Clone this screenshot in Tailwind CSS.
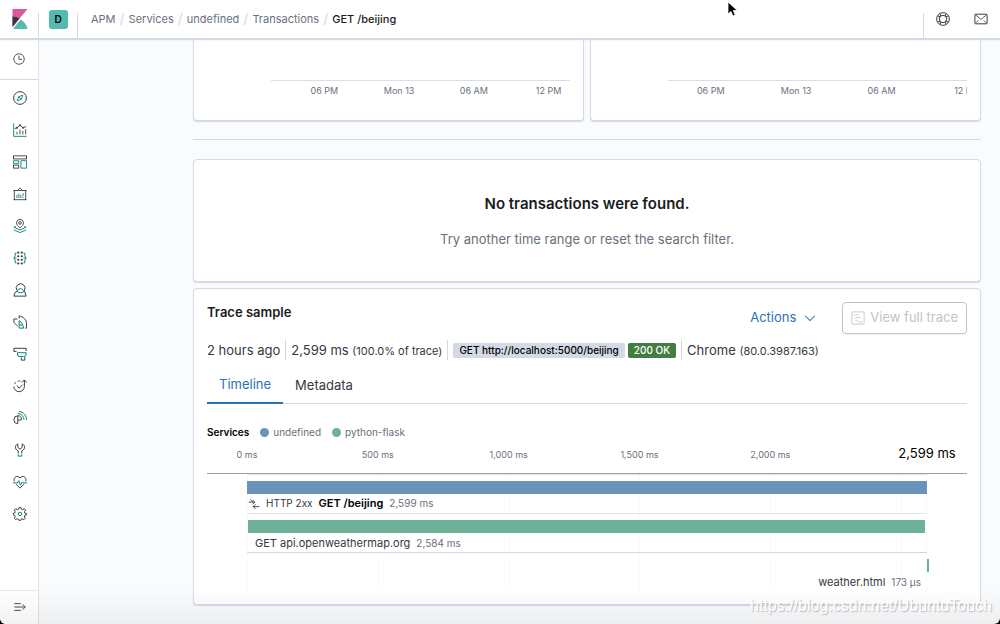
<!DOCTYPE html>
<html lang="en">
  <head>
    <meta charset="UTF-8" />
    <meta name="viewport" content="width=device-width, initial-scale=1.0" />
    <title>GET /beijing - Transactions - APM</title>
    <script src="https://cdn.jsdelivr.net/npm/@tailwindcss/browser@4"></script>
  </head>
  <body class="bg-black font-['Inter',sans-serif] text-[#343741] antialiased">
    <div class="relative flex h-screen flex-col overflow-hidden rounded-b-md bg-[#fafbfd]">
      <!-- Header -->
      <header class="relative z-10 flex h-[39px] shrink-0 items-stretch border-b border-[#d3dae6] bg-white shadow-[0_1px_1px_#d3dae6]">
        <a href="#" aria-label="Kibana home" class="flex w-[38px] items-center justify-center">
          <svg class="ml-0.5 h-5 w-4" viewBox="0 0 16 20">
            <path fill="#e0569b" d="M0.500 0H15.500L0.500 18z" />
            <path fill="#343741" d="M0.500 7.500v10.500l7-8.500C5.500 8.300 3 7.500.5 7.500z" />
            <path fill="#54b9b1" d="M8.600 10.600L1 20h14.500c-.7-3.900-3.300-7.300-6.900-9.400z" />
          </svg>
        </a>
        <div class="mt-[13px] w-px bg-[#d3dae6]"></div>
        <button class="flex w-[38px] items-center justify-center" aria-label="Default space">
          <span class="flex size-[19px] items-center justify-center rounded-[3px] bg-[#54b9b1] text-[10px] font-semibold text-black">D</span>
        </button>
        <div class="mt-[13px] w-px bg-[#d3dae6]"></div>
        <nav class="flex flex-1 items-center gap-1 pl-[13px] text-[11px] text-[#69707d]">
          <a href="#">APM</a>
          <span class="text-sm text-[#d3dae6]">/</span>
          <a href="#">Services</a>
          <span class="text-sm text-[#d3dae6]">/</span>
          <a href="#">undefined</a>
          <span class="text-sm text-[#d3dae6]">/</span>
          <a href="#">Transactions</a>
          <span class="text-sm text-[#d3dae6]">/</span>
          <span class="font-medium text-[#1a1c21]">GET /beijing</span>
        </nav>
        <div class="mt-[13px] w-px bg-[#d3dae6]"></div>
        <button class="flex w-[38px] items-center justify-center" aria-label="Help">
          <svg class="size-[14px]" viewBox="0 0 32 32" fill="none" stroke="#343741" stroke-width="2.200">
            <circle cx="16" cy="16" r="14.500" />
            <circle cx="16" cy="16" r="8.500" />
            <path d="M9 3.500l2 6M23 3.500l-2 6M9 28.500l2-6M23 28.500l-2-6M3.500 9l6 2M3.500 23l6-2M28.500 9l-6 2M28.500 23l-6-2" />
          </svg>
        </button>
        <button class="flex w-[38px] items-center justify-center" aria-label="News">
          <svg class="size-[14px]" viewBox="0 0 32 32" fill="none" stroke="#343741" stroke-width="2.200">
            <rect x="2" y="5" width="28" height="22" rx="2" />
            <path d="M3 6l13 11L29 6M3 26l7-7M29 26l-7-7" stroke-width="1.800" />
          </svg>
        </button>
      </header>

      <div class="flex min-h-0 flex-1">
        <!-- Side nav -->
        <nav class="flex w-[39px] shrink-0 flex-col border-r border-[#e3e8f0] bg-white shadow-xs">
          <a href="#" aria-label="Recently viewed" class="flex h-[41px] items-center justify-center border-b border-[#d3dae6]">
            <svg class="size-3" viewBox="0 0 32 32" fill="none" stroke="#343741" stroke-width="2.200">
              <circle cx="16" cy="16" r="14" />
              <path d="M16 7v10h8" />
            </svg>
          </a>
          <div class="flex flex-1 flex-col pt-0.5 pl-px">
            <a href="#" aria-label="Discover" class="flex h-8 items-center justify-center">
              <svg class="size-[14px]" viewBox="0 0 32 32" fill="none" stroke="#343741" stroke-width="2.200">
                <circle cx="16" cy="16" r="14.500" />
                <path d="M22.500 9.500l-3.500 9.500-9.500 3.500 3.500-9.500zM13 13l6 6" stroke="#017d73" stroke-width="2" />
              </svg>
            </a>
            <a href="#" aria-label="Visualize" class="flex h-8 items-center justify-center">
              <svg class="size-[14px]" viewBox="0 0 32 32" fill="none" stroke="#343741" stroke-width="2">
                <path d="M1.500 1v29.500H31" stroke="#017d73" />
                <path d="M9 20v6M16 15v11M22.500 18v8M29 14v12M4 13l5-2 7-6 7 6 7-3" />
                <circle cx="9" cy="11" r="1.500" /><circle cx="16" cy="5" r="1.500" /><circle cx="23" cy="11" r="1.500" />
              </svg>
            </a>
            <a href="#" aria-label="Dashboard" class="flex h-8 items-center justify-center">
              <svg class="size-[14px]" viewBox="0 0 32 32" fill="none" stroke="#343741" stroke-width="2">
                <rect x="1" y="2" width="30" height="7" />
                <path d="M1 13h12v6H1zM18 13h13v17H18z" stroke="#017d73" />
                <rect x="1" y="23" width="12" height="7" />
              </svg>
            </a>
            <a href="#" aria-label="Canvas" class="flex h-8 items-center justify-center">
              <svg class="size-[14px]" viewBox="0 0 32 32" fill="none" stroke="#343741" stroke-width="2">
                <path d="M1 8h30M1 29h30M3 8v21M29 8v21M10 8l6-6 6 6" />
                <path d="M9 18v7M13.500 15v10M18 18v7M23 14v7M23 23v2" stroke="#017d73" />
              </svg>
            </a>
            <a href="#" aria-label="Maps" class="flex h-8 items-center justify-center">
              <svg class="size-[14px]" viewBox="0 0 32 32" fill="none" stroke="#343741" stroke-width="2">
                <path d="M16 20c-5-4-8-7-8-11a8 8 0 0 1 16 0c0 4-3 7-8 11z" />
                <circle cx="16" cy="9" r="3" />
                <path d="M7 17l-5 2 14 6 14-6-5-2M2 25l14 6 14-6" stroke="#017d73" />
              </svg>
            </a>
            <a href="#" aria-label="Machine Learning" class="flex h-8 items-center justify-center">
              <svg class="size-[14px]" viewBox="0 0 32 32" fill="none" stroke="#017d73" stroke-width="2.200">
                <path d="M8 5H5v6l-3 5 3 5v6h3M24 5h3v6l3 5-3 5v6h-3M3 16h5M24 16h5" />
                <g fill="#343741" stroke="none">
                  <circle cx="12" cy="3.500" r="2.500" /><circle cx="20" cy="3.500" r="2.500" />
                  <circle cx="12" cy="12" r="2.500" /><circle cx="20" cy="12" r="2.500" />
                  <circle cx="12" cy="20" r="2.500" /><circle cx="20" cy="20" r="2.500" />
                  <circle cx="12" cy="28.500" r="2.500" /><circle cx="20" cy="28.500" r="2.500" />
                </g>
              </svg>
            </a>
            <a href="#" aria-label="Metrics" class="flex h-8 items-center justify-center">
              <svg class="size-[14px]" viewBox="0 0 32 32" fill="none" stroke="#343741" stroke-width="2.200">
                <path d="M9 17a10 10 0 1 1 17 0l4 13H2l3-9 5-2" />
                <path d="M10 20c0-5 3-7 7-7s7 2 7 7c-4 3-10 3-14 0z" stroke="#017d73" />
              </svg>
            </a>
            <a href="#" aria-label="Logs" class="flex h-8 items-center justify-center">
              <svg class="size-[14px]" viewBox="0 0 32 32" fill="none" stroke="#343741" stroke-width="2.200">
                <path d="M10 25L2 17V9h8M14 8V2c10 2 17 9 17 18v10h-3" />
                <path d="M14 30V13c6 3 9 9 10 17zM14 23h7" stroke="#017d73" />
              </svg>
            </a>
            <a href="#" aria-label="APM" class="flex h-8 items-center justify-center">
              <svg class="size-[14px]" viewBox="0 0 32 32" fill="none" stroke="#343741" stroke-width="2.200">
                <path d="M8 10H2V3h28v6M19 24v6h8v-7" />
                <path d="M10 13h20v3a6 6 0 0 1-6 6h-8a6 6 0 0 1-6-6z" stroke="#017d73" />
              </svg>
            </a>
            <a href="#" aria-label="Uptime" class="flex h-8 items-center justify-center">
              <svg class="size-[14px]" viewBox="0 0 32 32" fill="none" stroke="#343741" stroke-width="2.200">
                <path d="M2 17a12 12 0 0 0 24 0V3M20 8l6-6 5 6M9 15l5 6 8-8" />
                <path d="M3 12a12 12 0 0 1 4-5M11 5a12 12 0 0 1 6 0" stroke="#017d73" />
              </svg>
            </a>
            <a href="#" aria-label="SIEM" class="flex h-8 items-center justify-center">
              <svg class="size-[14px]" viewBox="0 0 32 32" fill="none" stroke="#343741" stroke-width="2.200">
                <path d="M11 11a9 9 0 1 0 0 18zM11 11a7 7 0 0 1 8 9l-8 1" />
                <path d="M11 6c8 0 13 5 14 14M14 1c10 1 16 8 17 19" stroke="#017d73" />
              </svg>
            </a>
            <a href="#" aria-label="Dev Tools" class="flex h-8 items-center justify-center">
              <svg class="size-[14px]" viewBox="0 0 32 32" fill="none" stroke="#343741" stroke-width="2.200">
                <path d="M12 24v-6C3 14 4 5 11 2v8l5 4 5-4V2c7 3 8 12-1 16v6" />
                <path d="M12 26v4h8v-4" stroke="#017d73" />
              </svg>
            </a>
            <a href="#" aria-label="Stack Monitoring" class="flex h-8 items-center justify-center">
              <svg class="size-[14px]" viewBox="0 0 32 32" fill="none" stroke="#343741" stroke-width="2.200">
                <path d="M3 14c-3-9 7-15 13-7 6-8 16-2 13 7M7 21l9 9 9-9" />
                <path d="M0 18h10l3-5 4 10 4-7 2 2h9" stroke="#017d73" />
              </svg>
            </a>
            <a href="#" aria-label="Management" class="flex h-8 items-center justify-center">
              <svg class="size-[14px]" viewBox="0 0 32 32" fill="none" stroke="#343741" stroke-width="2.200">
                <path d="M13 5l1-4h4l1 4 3 1 4-2 3 3-3 4 1 3 4 1v3l-4 1-1 4 2 3-3 3-4-2-3 1-1 3h-3l-1-3-4-1-3 2-3-3 2-4-1-3-4-1v-3l4-1 1-4-2-3 3-3 4 2z" />
                <circle cx="16" cy="16" r="4" stroke="#017d73" />
              </svg>
            </a>
          </div>
          <button aria-label="Expand navigation" class="flex h-[34px] items-center justify-center border-t border-[#e3e8f0] pb-0.5 pl-px">
            <svg class="size-3" viewBox="0 0 32 32" fill="none" stroke="#343741" stroke-width="2.400">
              <path d="M1 7h17M1 16h29M1 25h17M23 9l7 7-7 7" />
            </svg>
          </button>
        </nav>

        <!-- Content -->
        <main class="min-w-0 flex-1 overflow-hidden pr-[19px] pl-[154px]">
          <div class="grid grid-cols-2 gap-1.5">
            <section class="h-[82px] rounded-b border border-t-0 border-[#d3dae6] bg-white pt-[41px] pr-[13px] pl-[77px] shadow-[0_1px_1px_#d3dae6]">
              <div class="flex border-t border-[#dcdee3] pt-1 text-center text-[9px] leading-3 text-[#69707d]">
                <span class="ml-4 w-1/4 shrink-0">06 PM</span>
                <span class="w-1/4 shrink-0">Mon 13</span>
                <span class="w-1/4 shrink-0">06 AM</span>
                <span class="w-1/4 shrink-0">12 PM</span>
              </div>
            </section>
            <section class="h-[82px] rounded-b border border-t-0 border-[#d3dae6] bg-white pt-[41px] pr-[13px] pl-[77px] shadow-[0_1px_1px_#d3dae6]">
              <div class="flex overflow-hidden border-t border-[#dcdee3] pt-1 text-center text-[9px] leading-3 text-[#69707d]">
                <span class="w-2/7 shrink-0">06 PM</span>
                <span class="w-2/7 shrink-0">Mon 13</span>
                <span class="w-2/7 shrink-0">06 AM</span>
                <span class="w-2/7 shrink-0">12 PM</span>
              </div>
            </section>
          </div>

          <hr class="my-[18px] border-[#d3dae6]" />

          <section class="mt-[19px] rounded border border-[#d3dae6] bg-white pt-8 pb-8 text-center shadow-[0_1px_1px_#d3dae6]">
            <h2 class="text-[15px] leading-6 font-semibold text-[#1a1c21]">No transactions were found.</h2>
            <p class="mt-[13px] text-[13px] leading-5 text-[#69707d]">Try another time range or reset the search filter.</p>
          </section>

          <section class="mt-1.5 rounded border border-[#d3dae6] bg-white px-[13px] pt-[13px] pb-3.5 shadow-[0_1px_1px_#d3dae6]">
            <div class="flex items-start">
              <h3 class="flex-1 text-[13px] leading-5 font-semibold text-[#1a1c21]">Trace sample</h3>
              <button class="flex h-8 items-center gap-2 text-[13px] text-[#2b72b6]">
                Actions
                <svg class="size-3" viewBox="0 0 16 16" fill="none" stroke="currentColor" stroke-width="1.400"><path d="M1.500 5L8 11.500 14.500 5" /></svg>
              </button>
              <button disabled class="ml-[26px] flex h-8 items-center gap-[5px] rounded border border-[#c2c3c6] px-2 text-[13px] text-[#c2c3c6] shadow-xs">
                <svg class="size-[14px]" viewBox="0 0 16 16" fill="none" stroke="currentColor">
                  <rect x="1" y="1" width="14" height="14" rx="1" />
                  <path d="M3 4.500h6M5 7.500h6M5 10.500h3M8 12.500h5" />
                </svg>
                View full trace
              </button>
            </div>

            <div class="mt-1.5 flex h-5 items-center text-[13px] leading-5">
              <span>2 hours ago</span>
              <span class="mx-[5px] h-5 w-px bg-[#d3dae6]"></span>
              <span>2,599 ms <span class="text-[11px]">(100.0% of trace)</span></span>
              <span class="mx-[5px] h-5 w-px bg-[#d3dae6]"></span>
              <span class="rounded-xs bg-[#d3dae6] px-1.5 text-[10px] leading-[15px] font-medium text-black">GET http://localhost:5000/beijing</span>
              <span class="ml-[3px] rounded-xs bg-[#427d41] px-1.5 text-[10px] leading-[15px] font-medium text-white">200 OK</span>
              <span class="mx-[5px] h-5 w-px bg-[#d3dae6]"></span>
              <span>Chrome <span class="text-[11px]">(80.0.3987.163)</span></span>
            </div>

            <div role="tablist" class="mt-[5px] flex border-b border-[#d3dae6] text-[13px] leading-5">
              <button role="tab" aria-selected="true" class="-mb-px border-b-2 border-[#2b72b6] px-3 pt-[9px] pb-2 text-[#2b72b6]">Timeline</button>
              <button role="tab" aria-selected="false" class="px-3 pt-[9px] pb-2">Metadata</button>
            </div>

            <div class="mt-5 flex items-center text-[10px] leading-4 text-[#69707d]">
              <span class="font-semibold text-black">Services</span>
              <span class="ml-[11px] size-[9px] rounded-full bg-[#6992bd]"></span>
              <span class="ml-1">undefined</span>
              <span class="ml-[11px] size-[9px] rounded-full bg-[#6db198]"></span>
              <span class="ml-1">python-flask</span>
            </div>

            <!-- Time axis: each tick starts at its share of 2,599 ms -->
            <div class="flex h-[34px] border-b border-[#98a2b3] px-10 pt-[3px] text-[9px] leading-6 whitespace-nowrap text-[#69707d]">
              <div class="w-[19.24%]"><span class="flex w-0 justify-center">0 ms</span></div>
              <div class="w-[19.24%]"><span class="flex w-0 justify-center">500 ms</span></div>
              <div class="w-[19.24%]"><span class="flex w-0 justify-center">1,000 ms</span></div>
              <div class="w-[19.24%]"><span class="flex w-0 justify-center">1,500 ms</span></div>
              <div class="flex-1"><span class="flex w-0 justify-center">2,000 ms</span></div>
              <div class="flex w-0 justify-center text-[13px] leading-5 text-black">2,599 ms</div>
            </div>

            <div class="relative mx-10">
              <div class="absolute inset-0 flex">
                <div class="w-[19.24%] border-l border-[#f8f9fb]"></div>
                <div class="w-[19.24%] border-l border-[#f8f9fb]"></div>
                <div class="w-[19.24%] border-l border-[#f8f9fb]"></div>
                <div class="w-[19.24%] border-l border-[#f8f9fb]"></div>
                <div class="w-[19.24%] border-l border-[#f8f9fb]"></div>
                <div class="flex-1 border-x border-[#f8f9fb]"></div>
              </div>
              <div class="relative h-10 border-y border-[#d3dae6]/70 pt-1.5">
                <div class="h-[13px] bg-[#6992bd]"></div>
                <div class="flex h-[19px] items-center gap-1.5 text-[10px]">
                  <svg class="ml-px size-3" viewBox="0 0 16 16" fill="none" stroke="#343741" stroke-width="1.200">
                    <path d="M1 5.500h8M6 2.500l3 3-3 3M15 11.500H7M10 8.500l-3 3 3 3M3 2l3 3" />
                  </svg>
                  <span>HTTP 2xx</span>
                  <span class="text-[11px] font-semibold text-black">GET /beijing</span>
                  <span class="text-[#69707d]">2,599 ms</span>
                </div>
              </div>
              <div class="relative h-[39px] border-b border-[#d3dae6] pt-1.5">
                <div class="ml-px h-[13px] bg-[#6db198]" style="width: 99.5%"></div>
                <div class="flex h-5 items-center gap-1.5 pl-2 text-[11px]">
                  <span>GET api.openweathermap.org</span>
                  <span class="text-[10px] text-[#69707d]">2,584 ms</span>
                </div>
              </div>
              <div class="relative h-[37px] pt-1.5">
                <div class="-mr-0.5 ml-auto h-[13px] w-0.5 bg-[#6db198]"></div>
                <div class="flex h-5 items-center justify-end gap-1.5 pr-1.5 text-[11px]">
                  <span>weather.html</span>
                  <span class="text-[10px] text-[#69707d]">173 μs</span>
                </div>
              </div>
            </div>
          </section>
        </main>
      </div>

      <div class="pointer-events-none absolute inset-x-0 bottom-0 z-20 h-9 bg-linear-to-t from-black/5 to-transparent"></div>
      <span class="absolute right-2 bottom-1.5 z-20 font-['Liberation_Sans',sans-serif] text-base text-white text-shadow-[1px_1px_1px_#b4b8c0]">https://blog.csdn.net/UbuntuTouch</span>
      <!-- Mouse pointer -->
      <svg class="pointer-events-none absolute top-0 left-[727px] z-20 h-[18px] w-3" viewBox="0 0 12 18">
        <path d="M1 2v12l3-2.500 2 4.500 2.200-1L6.300 10.500h4z" fill="#000" stroke="#fff" stroke-width=".8" />
      </svg>
    </div>
  </body>
</html>
